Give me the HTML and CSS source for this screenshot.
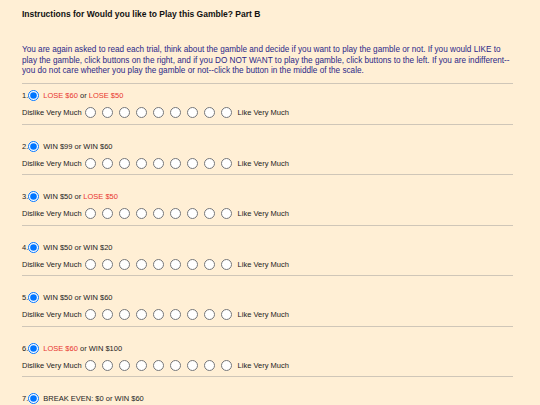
FILE: index.html
```html
<!DOCTYPE html>
<html lang="en">
<head>
  <meta charset="UTF-8">
  <title>Would you like to Play this Gamble? Part B</title>
  <link rel="stylesheet" href="styles.css">
</head>
<body>
  <div class="page">
    <h1>Instructions for Would you like to Play this Gamble? Part B</h1>
    <p class="intro">You are again asked to read each trial, think about the gamble and decide if you want to play the gamble or not. If you would LIKE to play the gamble, click buttons on the right, and if you DO NOT WANT to play the gamble, click buttons to the left. If you are indifferent--you do not care whether you play the gamble or not--click the button in the middle of the scale.</p>
    <hr>
    <div id="trials"></div>
  </div>

  <script>
    const trials = [
      [["lose", "LOSE $60"], ["lose", "LOSE $50"]],
      [["", "WIN $99"], ["", "WIN $60"]],
      [["", "WIN $50"], ["lose", "LOSE $50"]],
      [["", "WIN $50"], ["", "WIN $20"]],
      [["", "WIN $50"], ["", "WIN $60"]],
      [["lose", "LOSE $60"], ["", "WIN $100"]],
      [["", "BREAK EVEN: $0"], ["", "WIN $60"]]
    ];

    const list = document.getElementById("trials");

    trials.forEach((t, i) => {
      const n = i + 1;
      let dots = "";
      for (let k = 1; k <= 9; k++) {
        dots += `<input type="radio" name="scale${n}" value="${k}">`;
      }
      const div = document.createElement("div");
      div.className = "trial";
      div.innerHTML = `
        <div class="head">
          <span class="num">${n}.</span><input type="radio" class="pick" checked>
          <span class="${t[0][0]}">${t[0][1]}</span>&nbsp;or&nbsp;<span class="${t[1][0]}">${t[1][1]}</span>
        </div>
        <div class="scale">
          <span>Dislike Very Much</span>${dots}<span class="right">Like Very Much</span>
        </div>
        <hr>
      `;
      list.appendChild(div);
    });
  </script>
</body>
</html>
```

FILE: styles.css
```css
body {
  margin: 0;
  background: #ffefd5;
  font-family: "Liberation Sans", Arial, sans-serif;
  color: #222;
}

.page {
  padding: 9px 24px 0 22px;
}

h1 {
  font-size: 8.5px;
  font-weight: bold;
  margin: 0;
  line-height: 10px;
  color: #111;
}

.intro {
  font-size: 8.2px;
  line-height: 10.5px;
  color: #2b2888;
  margin: 26px 0 6px;
}

hr {
  border: none;
  border-top: 1px solid #cfc6b8;
  margin: 0 3px 0 0;
}

.trial {
  font-size: 7.5px;
}

.trial:first-child .head {
  margin-top: 5px;
}

.head {
  display: flex;
  align-items: center;
  height: 14px;
  margin-top: 14.5px;
}

.head input {
  width: 11px;
  height: 11px;
  margin: 0 4px 0 0;
}

.lose {
  color: #e8352e;
}

.scale {
  display: flex;
  align-items: center;
  height: 14px;
  margin-top: 3px;
  margin-bottom: 4px;
}

.scale input {
  width: 11px;
  height: 11px;
  margin: 0 3px;
}

.scale .right {
  margin-left: 3px;
}
```
